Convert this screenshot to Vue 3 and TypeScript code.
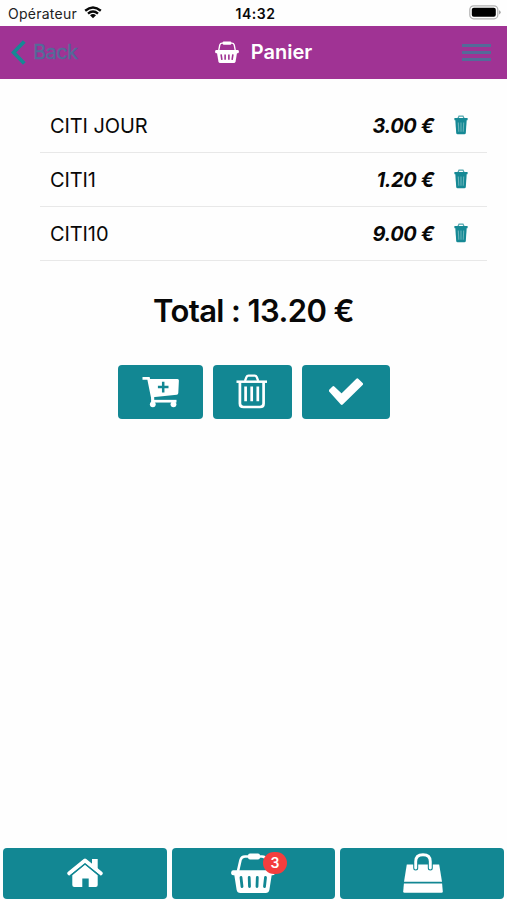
<script setup lang="ts">
interface CartItem {
  id: number
  label: string
  price: number
}

const items: CartItem[] = [
  { id: 1, label: 'CITI JOUR', price: 3 },
  { id: 2, label: 'CITI1', price: 1.2 },
  { id: 3, label: 'CITI10', price: 9 },
]

const total: number = items.reduce((sum, item) => sum + item.price, 0)
const format = (value: number): string => `${value.toFixed(2)} €`
</script>

<template>
  <div class="screen">
    <div class="status">
      <div class="carrier">
        <span class="carrier-name">Opérateur</span>
        <svg class="wifi" width="18" height="13" viewBox="0 0 18 13" fill="none" stroke="#080808" stroke-width="2.4">
          <path d="M1.2 4.7Q9-1.7 16.8 4.7" />
          <path d="M4 7.7Q9 3.5 14 7.7" />
          <path d="M9 12.2L6 9.2Q9 6.9 12 9.2Z" fill="#080808" stroke="none" />
        </svg>
      </div>
      <span class="time">14:32</span>
      <svg class="battery" width="32" height="15" viewBox="0 0 32 15">
        <rect x="0.8" y="0.8" width="28" height="13" rx="3.8" fill="#fff" stroke="#b2b2b2" stroke-width="1.2" />
        <rect x="2.8" y="2.8" width="24" height="9" rx="2" fill="#000" />
        <path d="M30.2 5.2Q31.6 5.8 31.6 7.3T30.2 9.4Z" fill="#999" />
      </svg>
    </div>

    <header class="header">
      <button class="back">
        <svg width="15" height="25" viewBox="0 0 15 25" fill="none" stroke="currentColor" stroke-width="3.8">
          <path d="M13.3 1.5L2.6 12.5L13.3 23.5" />
        </svg>
        <span>Back</span>
      </button>
      <h1 class="title">
        <svg width="24" height="22" viewBox="0 0 44 41" fill="none">
          <path d="M6.500 18L8.500 7.500Q9.500 4 13 4H31Q34.500 4 35.500 7.500L37.500 18" stroke="#fff" stroke-width="2.500" />
          <rect x="14" y="1" width="16" height="6" rx="2" fill="#fff" />
          <rect x="0" y="17" width="44" height="6" rx="2" fill="#fff" />
          <path d="M3 20H41L38 38Q37.500 41 34.500 41H9.500Q6.500 41 6 38Z" fill="#fff" />
          <path d="M11 25L12.500 35M18.500 25V35M25.500 25V35M33 25L31.500 35" stroke="#a03394" stroke-width="3" />
        </svg>
        <span>Panier</span>
      </h1>
      <button class="menu" aria-label="Menu"><i></i><i></i><i></i></button>
    </header>

    <main>
      <ul class="list">
        <li v-for="item in items" :key="item.id" class="row">
          <span class="label">{{ item.label }}</span>
          <span class="price">{{ format(item.price) }}</span>
          <svg class="bin" width="14" height="20" viewBox="0 0 14 20" fill="none">
            <path d="M4 3.200L5 1.200H9L10 3.200" stroke="#4fa5ad" stroke-width="1.200" />
            <path d="M0.400 3H13.600V5.200H0.400Z" fill="#168995" />
            <path d="M1.300 5H12.700L11.800 18Q11.600 19.300 10.400 19.300H3.600Q2.400 19.300 2.200 18Z" fill="#168995" />
            <path d="M4.300 7.500L4.800 16.800M7 7.500V16.800M9.700 7.500L9.200 16.800" stroke="#67b2b8" stroke-width="1.100" />
          </svg>
        </li>
      </ul>

      <h2 class="total">Total : {{ format(total) }}</h2>

      <div class="actions">
        <button class="btn add" aria-label="Ajouter">
          <svg width="38" height="32" viewBox="0 0 38 32" fill="none">
            <path d="M0.500 2.300H6.500L10.800 23.500" stroke="#fff" stroke-width="2.800" />
            <path d="M7 3H35.500Q37 3 36.900 4.500L36.300 17Q36.200 18.500 34.800 18.700L10.500 21.300Z" fill="#fff" />
            <path d="M9.500 25.200H34.500" stroke="#fff" stroke-width="2.700" />
            <path d="M10.700 21V27" stroke="#fff" stroke-width="3" />
            <circle cx="10.800" cy="28.300" r="2.900" fill="#fff" />
            <circle cx="31.500" cy="28.300" r="2.900" fill="#fff" />
            <path d="M21.200 5.800V16.400M15.900 11.100H26.500" stroke="#128793" stroke-width="2.500" />
          </svg>
        </button>
        <button class="btn clear" aria-label="Vider">
          <svg width="32" height="35" viewBox="0 0 32 35" fill="none" stroke="#fff">
            <path d="M9 7L10.400 3.200Q11 1.700 12.500 1.700H18.700Q20.200 1.700 20.800 3.200L22.200 7" stroke-width="2.300" />
            <path d="M0.500 7.700H31" stroke-width="2.500" />
            <path d="M3.900 8V29.500Q3.900 33 7.500 33H24Q27.600 33 27.600 29.500V8" stroke-width="2.700" />
            <path d="M9.600 12.500V27.200M15.700 12.500V27.200M21.800 12.500V27.200" stroke-width="2.700" />
          </svg>
        </button>
        <button class="btn confirm" aria-label="Valider">
          <svg width="34" height="28" viewBox="0 0 34 28">
            <path d="M1.100 12.700L4.400 9.400L12.600 17.200L28.300 1.600L32.700 6L12.800 25.600Z" fill="#fff" stroke="#fff" stroke-width="2.600" stroke-linejoin="round" />
          </svg>
        </button>
      </div>
    </main>

    <nav class="tabs">
      <button class="btn tab" aria-label="Accueil">
        <svg class="home" width="36" height="30" viewBox="0 0 36 30" fill="none">
          <path d="M25 1H30.700V14L25 9.500Z" fill="#fff" />
          <path d="M2.300 15.300L18 2.600L33.700 15.300" stroke="#fff" stroke-width="4" stroke-linecap="round" stroke-linejoin="round" />
          <path d="M5.300 17.200L18 6.800L30.700 17.200V27Q30.700 29 28.700 29H21.700V20.500H15.300V29H7.300Q5.300 29 5.300 27Z" fill="#fff" />
          <path d="M3.200 17.700L18 5.800L32.800 17.700" stroke="#128793" stroke-width="1.100" />
        </svg>
      </button>
      <button class="btn tab" aria-label="Panier">
        <span class="basket">
          <svg width="44" height="41" viewBox="0 0 44 41" fill="none">
            <path d="M7 18L9.500 7Q10.500 3.500 14 3.500H31Q34.500 3.500 35.500 7L37 18" stroke="#fff" stroke-width="2.600" />
            <rect x="17" y="0.600" width="12" height="6" rx="2" fill="#fff" />
            <rect x="0.200" y="17.300" width="43.600" height="5" rx="2" fill="#fff" />
            <path d="M3 20H41L38.400 36.800Q37.800 40 34.600 40H9.400Q6.200 40 5.600 36.800Z" fill="#fff" />
            <path d="M10 24.500L11 33.500M18.200 24.500L18.500 33.500M26.300 24.500L26 33.500M34.500 24.500L33.500 33.500" stroke="#128793" stroke-width="2.800" stroke-linecap="round" />
          </svg>
          <span class="badge">{{ items.length }}</span>
        </span>
      </button>
      <button class="btn tab" aria-label="Boutique">
        <svg class="bag" width="40" height="40" viewBox="0 0 40 40" fill="none">
          <path d="M3.800 11.500H36.200L39 28.800H1Z" fill="#fff" />
          <path d="M0.900 30.500H39.100L39.800 38.500Q39.800 39.700 38.500 39.700H1.500Q0.200 39.700 0.200 38.500Z" fill="#fff" />
          <path d="M12.700 15V8.500Q12.700 1.700 20 1.700T27.300 8.500V15" stroke="#128793" stroke-width="5" stroke-linecap="round" />
          <path d="M12.700 15V8.500Q12.700 1.700 20 1.700T27.300 8.500V15" stroke="#fff" stroke-width="2.900" stroke-linecap="round" />
        </svg>
      </button>
    </nav>
  </div>
</template>

<style>
body {
  background: #fefefe;
}
</style>

<style scoped>
.screen {
  box-sizing: border-box;
  height: 900px;
  display: flex;
  flex-direction: column;
  overflow: hidden;
  font-family: Inter, "Liberation Sans", sans-serif;
  color: #080808;
}
button {
  border: 0;
  padding: 0;
  margin: 0;
  background: none;
  font: inherit;
}
svg {
  display: block;
  flex: none;
}
.status {
  height: 25.500px;
  flex: none;
  display: grid;
  grid-template-columns: 1fr auto 1fr;
  align-items: center;
  box-sizing: border-box;
  padding: 2px 6px 0 8px;
}
.carrier {
  display: flex;
  align-items: center;
  gap: 7px;
  font-size: 14px;
  line-height: 18px;
}
.carrier-name {
  color: #222;
  letter-spacing: 0.25px;
}
.wifi {
  margin-bottom: 2px;
}
.time {
  font-size: 14px;
  font-weight: 600;
  line-height: 18px;
  letter-spacing: 0.55px;
  padding-left: 2px;
}
.battery {
  justify-self: end;
  margin-bottom: 2px;
}
.header {
  height: 53.500px;
  flex: none;
  box-sizing: border-box;
  padding: 0 16px 0 11px;
  display: grid;
  grid-template-columns: 1fr auto 1fr;
  align-items: center;
  background: #a03394;
}
.back {
  display: flex;
  align-items: center;
  gap: 7px;
  color: #168995;
  font-size: 20px;
  line-height: 24px;
}
.back span {
  color: #536b99;
  letter-spacing: -0.55px;
  -webkit-text-stroke: 0.4px #536b99;
}
.title {
  margin: 0;
  padding-left: 25px;
  display: flex;
  align-items: center;
  gap: 12px;
  color: #fff;
  font-size: 20px;
  line-height: 24px;
  font-weight: 600;
}
.menu {
  justify-self: end;
  display: flex;
  flex-direction: column;
  gap: 4px;
  padding-top: 1px;
}
.menu i {
  width: 29px;
  height: 3px;
  background: #536b99;
}
main {
  flex: 1;
}
.list {
  list-style: none;
  margin: 20px 20px 0 40px;
  padding: 0;
}
.row {
  display: flex;
  align-items: center;
  box-sizing: border-box;
  height: 54px;
  padding: 0 19px 0 10px;
  border-bottom: 1px solid #e8e8e8;
  font-size: 20px;
  line-height: 24px;
}
.label {
  flex: 1;
  letter-spacing: -0.1px;
}
.price {
  font-style: italic;
  font-weight: 700;
  letter-spacing: -0.4px;
}
.bin {
  margin-left: 20px;
  margin-bottom: 2px;
}
.total {
  margin: 30px 0 0;
  text-align: center;
  font-size: 31px;
  line-height: 40px;
  font-weight: 600;
  letter-spacing: -0.600px;
}
.actions {
  display: flex;
  justify-content: center;
  gap: 10px;
  margin-top: 34px;
}
.btn {
  display: flex;
  align-items: center;
  justify-content: center;
  background: #128793;
  border-radius: 4px;
}
.actions .btn {
  height: 54px;
}
.add {
  width: 85px;
}
.add svg {
  margin-left: 2px;
}
.clear {
  width: 79px;
}
.clear svg {
  margin-bottom: 1px;
}
.confirm {
  width: 88px;
}
.tabs {
  flex: none;
  display: flex;
  gap: 5px;
  padding: 0 3px 1px;
}
.tab {
  flex: 1;
  height: 51px;
}
.home {
  margin-bottom: 1px;
}
.bag {
  margin-bottom: 1px;
  margin-left: 1px;
}
.basket {
  position: relative;
  margin-right: 1px;
}
.badge {
  position: absolute;
  left: 32px;
  top: -1px;
  width: 24px;
  height: 22px;
  border-radius: 11px;
  background: #f33e3e;
  color: #fff;
  font-size: 14px;
  line-height: 22px;
  font-weight: 600;
  text-align: center;
}
</style>
